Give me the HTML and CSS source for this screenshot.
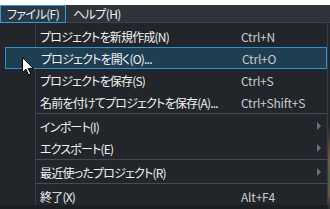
FILE: index.html
```html
<!DOCTYPE html>
<html lang="ja">
<head>
<meta charset="utf-8">
<link rel="stylesheet" href="styles.css">
</head>
<body>
<div class="topgap"></div>
<div class="menubar">
  <div class="mb-item active">ファイル(F)</div>
  <div class="mb-item">ヘルプ(H)</div>
</div>
<div class="desk">
  <div class="menu">
    <div class="row"><span class="gut"></span><span class="label">プロジェクトを新規作成(N)</span><span class="key">Ctrl+N</span><span class="arr"></span></div>
    <div class="row hl"><span class="gut"></span><span class="label">プロジェクトを開く(O)...</span><span class="key">Ctrl+O</span><span class="arr"></span></div>
    <div class="row"><span class="gut"></span><span class="label">プロジェクトを保存(S)</span><span class="key">Ctrl+S</span><span class="arr"></span></div>
    <div class="row"><span class="gut"></span><span class="label">名前を付けてプロジェクトを保存(A)...</span><span class="key">Ctrl+Shift+S</span><span class="arr"></span></div>
    <div class="sep"><span class="gut"></span><span class="line"></span></div>
    <div class="row"><span class="gut"></span><span class="label">インポート(I)</span><span class="key"></span><span class="arr"><i class="tri"></i></span></div>
    <div class="row"><span class="gut"></span><span class="label">エクスポート(E)</span><span class="key"></span><span class="arr"><i class="tri"></i></span></div>
    <div class="sep"><span class="gut"></span><span class="line"></span></div>
    <div class="row"><span class="gut"></span><span class="label">最近使ったプロジェクト(R)</span><span class="key"></span><span class="arr"><i class="tri"></i></span></div>
    <div class="sep"><span class="gut"></span><span class="line"></span></div>
    <div class="row"><span class="gut"></span><span class="label">終了(X)</span><span class="key">Alt+F4</span><span class="arr"></span></div>
  </div>
  <div class="edge"></div>
  <svg class="cursor" width="13" height="19" viewBox="0 0 13 19">
    <path d="M0.5 0.5 L0.5 15.5 L4 12.2 L6.6 18 L8.8 17 L6.3 11.4 L11.2 11.4 Z" fill="#ffffff" stroke="#000000" stroke-width="1" stroke-linejoin="miter"/>
  </svg>
</div>
</body>
</html>
```

FILE: styles.css
```css
* { box-sizing: border-box; }
html, body { margin: 0; padding: 0; }
body {
  width: 330px;
  height: 209px;
  overflow: hidden;
  background: #1b1e22;
  font-family: "Noto Sans CJK JP", "Noto Sans", sans-serif;
  font-size: 12px;
  font-feature-settings: "palt";
  color: #f2f2f2;
}
.topgap { height: 5px; background: #ffffff; }
.menubar {
  height: 18px;
  background: #2e3239;
  border-bottom: 1px solid #3d424a;
  display: flex;
  align-items: stretch;
}
.mb-item {
  height: 18px;
  padding: 0 6px;
  line-height: 16px;
  border: 1px solid transparent;
  color: #f0f0f0;
  white-space: nowrap;
  letter-spacing: -0.6px;
}
.mb-item.active {
  background: #263a48;
  border-color: #3b9bd8;
}
.desk {
  position: relative;
  display: flex;
  height: 186px;
}
.menu {
  width: 328px;
  height: 182px;
  overflow: hidden;
  background: #22262b;
  border-right: 1px solid #393e45;
  padding: 2px 0 0 5px;
}
.row {
  display: grid;
  grid-template-columns: 31px 205px 1fr 16px;
  height: 22px;
  align-items: center;
  width: 322px;
}
.gut {
  align-self: stretch;
  border-right: 1px solid #3b4047;
}
.label { padding-left: 4px; white-space: nowrap; letter-spacing: -0.8px; overflow: hidden; }
.key { color: #c9ccd0; white-space: nowrap; font-feature-settings: normal; letter-spacing: -0.2px; }
.arr { display: flex; align-items: center; padding-left: 6px; }
.tri {
  width: 0; height: 0;
  border-top: 4px solid transparent;
  border-bottom: 4px solid transparent;
  border-left: 4px solid #6c727a;
}
.row.hl {
  background: #1e3f52;
  border: 1px solid #2a93d2;
}
.row.hl .gut { border-right-color: transparent; }
.sep {
  display: flex;
  height: 2px;
  width: 322px;
}
.sep .gut { width: 31px; flex: none; }
.sep .line { flex: 1; height: 1px; background: #464b53; }
.edge {
  width: 2px;
  height: 186px;
  background: linear-gradient(#23272c 0 55%, #5b4e36 68%, #6e5a3c 74%, #486238 84%, #6a5640 92%, #2a2c2e 100%);
}
.cursor {
  position: absolute;
  left: 22px;
  top: 34px;
}
```
